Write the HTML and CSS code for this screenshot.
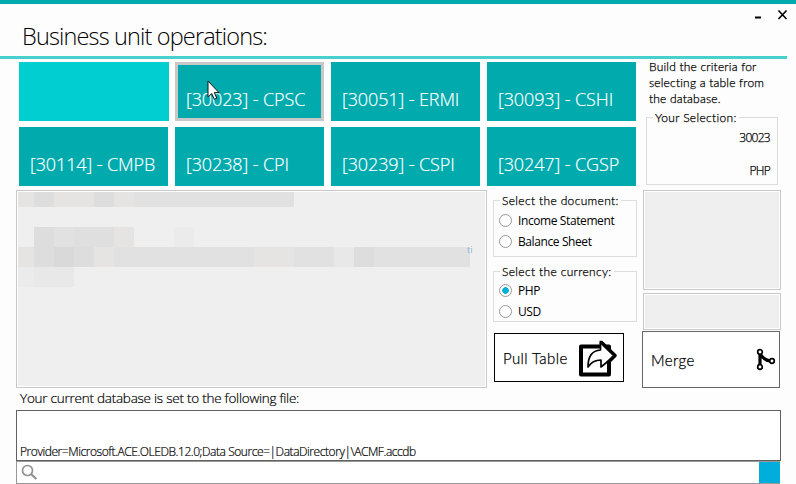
FILE: index.html
```html
<!DOCTYPE html>
<html lang="en">
<head>
<meta charset="utf-8">
<title>Business unit operations</title>
<link rel="stylesheet" href="styles.css">
</head>
<body>
<div class="window">
  <header class="header">
    <h1 class="title">Business unit operations:</h1>
    <div class="controls">
      <svg width="34" height="12" viewBox="0 0 34 12"><path d="M1 8.500h6" stroke="#000" stroke-width="2"/><path d="M24.500 1.500l8 8.500M32.500 1.500l-8 8.500" stroke="#000" stroke-width="1.600"/></svg>
    </div>
  </header>
  <div class="rule"></div>
  <main class="upper">
    <div class="tiles">
      <div class="tile blank"></div>
      <div class="tile active"><span>[30023] - CPSC</span>
        <svg class="cursor" width="14" height="21" viewBox="0 0 14 21"><path d="M1 1v16l3.700-3.500 2.600 5.800 2.500-1.100-2.500-5.600H12z" fill="#fff" stroke="#111" stroke-width="1"/></svg>
      </div>
      <div class="tile"><span>[30051] - ERMI</span></div>
      <div class="tile"><span>[30093] - CSHI</span></div>
      <div class="tile"><span>[30114] - CMPB</span></div>
      <div class="tile"><span>[30238] - CPI</span></div>
      <div class="tile"><span>[30239] - CSPI</span></div>
      <div class="tile"><span>[30247] - CGSP</span></div>
    </div>
    <aside class="criteria">
      <p class="hint">Build the criteria for<br>selecting a table from<br>the database.</p>
      <fieldset class="group selection">
        <legend>Your Selection:</legend>
        <div class="value">30023</div>
        <div class="value">PHP</div>
      </fieldset>
    </aside>
  </main>
  <section class="lower">
    <div class="panel output">
      <svg width="467" height="194" viewBox="18 192 467 194" shape-rendering="crispEdges">
        <path fill="#e5e4e2" d="M18 192h16v15H18zM54 192h40v15H54zM114 192h20v15h-20zM114 227h20v20h-20zM18 247h16v20H18zM94 247h20v20H94zM254 247h40v20h-40z"/>
        <path fill="#dddddd" d="M34 192h20v15H34zM94 192h20v15H94zM34 227h20v40H34zM74 247h20v20H74zM354 247h20v20h-20z"/>
        <path fill="#e1e1e1" d="M134 192h160v15H134zM54 227h20v20H54zM114 247h140v20H114zM294 247h40v20h-40zM374 247h96v20h-96z"/>
        <path fill="#dfdfdf" d="M74 227h40v20H74z"/>
        <path fill="#d9d9da" d="M54 247h20v20H54z"/>
        <path fill="#e8e8e8" d="M334 247h20v20h-20zM34 267h40v20H34z"/>
        <path fill="#ebebeb" d="M174 227h20v20h-20zM18 267h16v20H18z"/>
        <text x="467" y="253" class="remnant">ti</text>
      </svg>
    </div>
    <div class="options">
      <fieldset class="group doc">
        <legend>Select the document:</legend>
        <label class="radio"><i></i><span>Income Statement</span></label>
        <label class="radio"><i></i><span>Balance Sheet</span></label>
      </fieldset>
      <fieldset class="group cur">
        <legend>Select the currency:</legend>
        <label class="radio on"><i></i><span>PHP</span></label>
        <label class="radio"><i></i><span>USD</span></label>
      </fieldset>
      <div class="button pull"><span>Pull Table</span>
        <svg width="40" height="38" viewBox="0 0 40 38" stroke-linejoin="round"><path d="M3 7.500h28v28H3z" fill="#fff" stroke="#000" stroke-width="4"/><path d="M22.500 3L37 16.500 24 28.500v-7C17 21.500 12.500 24 10 28c0-11 4-16.500 12.500-17z" fill="#fff"/><path d="M21.500 3.500h2L37 16.500 29.500 24" fill="none" stroke="#000" stroke-width="3.600"/><path d="M22.500 4v7C14 11.500 10 17 10 28c2.500-4 6.500-7 13-7v7l8-6.500" fill="none" stroke="#000" stroke-width="1.700"/></svg>
      </div>
    </div>
    <div class="side">
      <div class="panel tall"></div>
      <div class="panel short"></div>
      <div class="button merge"><span>Merge</span>
        <svg width="20" height="23" viewBox="0 0 20 23"><path d="M4 4v14M4 5c2 5 6 7.500 11 8" fill="none" stroke="#000" stroke-width="3.200"/><g fill="#fff" stroke="#000" stroke-width="1.700"><circle cx="4" cy="4" r="2.300"/><circle cx="4" cy="19" r="2.300"/><circle cx="16" cy="13" r="2.300"/></g></svg>
      </div>
    </div>
  </section>
  <div class="caption"><span>Your current database is set to the following file:</span></div>
  <div class="connection"><span>Provider=Microsoft.ACE.OLEDB.12.0;Data Source=|DataDirectory|\ACMF.accdb</span></div>
  <div class="search">
    <svg width="17" height="17" viewBox="0 0 17 17" fill="none" stroke="#929292"><circle cx="6.500" cy="6.500" r="5" stroke-width="1.700"/><path d="M10.300 10.300l5 4.700" stroke-width="2.200"/></svg>
    <div class="go"></div>
  </div>
</div>
</body>
</html>
```
FILE: styles.css
```css
* { box-sizing: border-box; }
body { margin: 0; background: #fdfdfd; color: #000; font-family: "Open Sans", sans-serif; }
.window { width: 796px; height: 484px; overflow: hidden; border-top: 4px solid #00aaad; display: flex; flex-direction: column; }
span, legend { white-space: nowrap; }
svg { display: block; flex: none; }
.header { height: 52px; display: flex; justify-content: space-between; padding: 5px 8px 0 22px; }
.title { margin: 11px 0 0; font-size: 23.5px; line-height: 32px; font-weight: 300; letter-spacing: -0.85px; }
.rule { width: 787px; height: 3px; background: #48d1cc; flex: none; }
.upper { display: flex; height: 131px; flex: none; }
.tiles { margin: 3px 6px 0 19px; display: grid; grid-template-columns: repeat(4, 149px); grid-template-rows: 59px 59px; gap: 6px 7px; }
.tile { position: relative; background: #00aaad; color: #fff; padding: 22px 0 0 11px; font-size: 18px; line-height: 30px; font-weight: 300; letter-spacing: -0.1px; -webkit-text-stroke: 0.2px #fff; }
.tile.blank { background: #00ced1; width: 150px; }
.tile.active { border: 3px solid #c8c8c8; padding: 19px 0 0 8px; }
.cursor { position: absolute; left: 29px; top: 15px; }
.criteria { width: 139px; font-family: Lato, sans-serif; }
.hint { margin: 0 0 0 7px; font-size: 12px; line-height: 16px; height: 51px; letter-spacing: 0.2px; font-weight: 300; -webkit-text-stroke: 0.25px #000; }
.group { margin: 0; padding: 0; border: 1px solid #dcdcdc; min-width: 0; font-size: 12px; }
.group legend { font-family: Lato, sans-serif; line-height: 15px; height: 15px; margin-left: 6px; padding: 0 2px; letter-spacing: 0.35px; font-weight: 300; -webkit-text-stroke: 0.25px #000; }
.selection { margin-left: 4px; width: 132px; height: 75px; }
.value { font-family: "Open Sans", sans-serif; font-size: 12px; line-height: 33px; height: 33px; margin-top: -4px; padding-right: 7px; text-align: right; letter-spacing: -0.7px; font-weight: 300; -webkit-text-stroke: 0.25px #000; }
.value + .value { margin-top: 0; }
.lower { display: flex; height: 198px; flex: none; padding-left: 16px; }
.panel { border: 1px solid #c8c8c8; background: #efefef; box-shadow: inset 0 0 0 1px #fff; }
.output { width: 471px; padding: 1px; margin-right: 6px; }
.remnant { font-size: 9px; fill: #8bb5dc; }
.options { width: 149px; padding-top: 3px; }
.options .group { width: 144px; }
.doc { height: 64px; }
.cur { height: 58px; margin-top: 7px; }
.radio { display: flex; align-items: center; height: 21px; padding-left: 5px; letter-spacing: -0.4px; }
.doc .radio:first-of-type { margin-top: 2px; }
.cur .radio:first-of-type { margin-top: 1px; }
.radio i { width: 13px; height: 13px; border: 1px solid #999; border-radius: 50%; margin-right: 6px; background: #fff; flex: none; }
.radio.on i { background: radial-gradient(circle, #00aedb 0 3px, #fff 3.600px); }
.button { background: #fff; border: 1px solid #000; display: flex; align-items: center; justify-content: space-between; font-family: Lato, sans-serif; font-size: 15px; font-weight: 300; letter-spacing: 0.4px; -webkit-text-stroke: 0.25px #000; }
.pull { width: 130px; height: 49px; margin: 11px 0 0 1px; padding: 0 5px 0 8px; }
.button svg { -webkit-text-stroke: 0; }
.side { width: 139px; }
.side .panel { margin-left: 1px; width: 138px; }
.tall { height: 100px; }
.short { height: 37px; margin-top: 3px; }
.merge { width: 138px; height: 57px; margin-top: 1px; padding: 0 3px 0 8px; border-color: #666; }
.caption { height: 22px; padding-left: 20px; font-size: 13.5px; line-height: 21px; font-weight: 300; flex: none; letter-spacing: -0.24px; -webkit-text-stroke: 0.2px #000; }
.connection { height: 51px; flex: none; width: 765px; margin-left: 16px; border: 1px solid #606060; background: #fff; font-size: 12px; line-height: 16px; padding: 33px 0 0 3px; font-weight: 300; letter-spacing: -0.44px; -webkit-text-stroke: 0.2px #000; }
.search { height: 23px; flex: none; width: 764px; margin-left: 16px; border: 1px solid #999; background: #fff; display: flex; justify-content: space-between; padding-left: 4px; align-items: center; }
.go { width: 21px; height: 21px; background: #00aedb; margin-right: -1px; }
```
